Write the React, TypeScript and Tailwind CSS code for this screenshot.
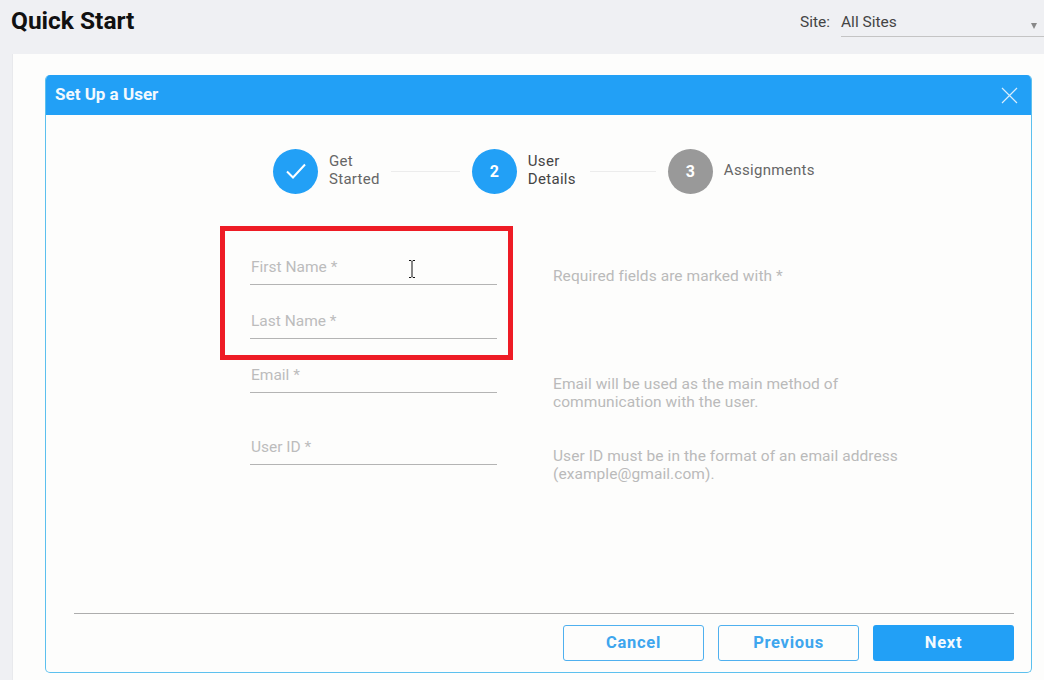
import React from 'react';

const fields = [
  { label: 'First Name *', rowClass: 'h-[54px]', hint: ['Required fields are marked with *'], hintClass: 'pt-[36px]' },
  { label: 'Last Name *', rowClass: 'h-[54px]', hint: [], hintClass: '' },
  { label: 'Email *', rowClass: 'h-[54px]', hint: ['Email will be used as the main method of', 'communication with the user.'], hintClass: 'pt-[36px]' },
  { label: 'User ID *', rowClass: 'h-[72px]', hint: ['User ID must be in the format of an email address', '(example@gmail.com).'], hintClass: 'pt-[54px]' },
];

const Step = ({ circle, done, lines, dark }: { circle: React.ReactNode; done: boolean; lines: string[]; dark?: boolean }) => (
  <div className="flex items-center">
    <div className={`flex h-[45px] w-[45px] items-center justify-center rounded-full text-[16px] font-bold text-white ${done ? 'bg-[#22a0f6]' : 'bg-[#999999]'}`}>
      {circle}
    </div>
    <div className={`mb-[3px] ml-[11px] text-[15px] leading-[18px] tracking-[0.3px] ${dark ? 'text-[#444444]' : 'text-[#666666]'}`}>
      {lines.map((l) => (
        <div key={l}>{l}</div>
      ))}
    </div>
  </div>
);

const Connector = ({ width }: { width: string }) => <div className={`h-px bg-[#ececec] ${width}`}></div>;

export default function App() {
  return (
    <div className="relative h-[680px] w-[1044px] overflow-hidden bg-[#eff0f3] font-['Roboto',sans-serif]">
      <div className="flex h-[54px] items-start justify-between">
        <h1 className="ml-[11px] mt-[5px] text-[24.5px] font-bold leading-[32px] text-[#111111]">Quick Start</h1>
        <div className="mt-[12px] flex items-start">
          <span className="mt-px text-[15.5px] leading-[18px] text-[#444444]">Site:</span>
          <div className="ml-[11px] flex h-[25px] w-[203px] items-start justify-between border-b border-[#c4c4c4]">
            <span className="mt-px text-[15.5px] leading-[18px] text-[#444444]">All Sites</span>
            <span className="mr-[7px] mt-[11px] h-0 w-0 border-x-[3.5px] border-t-[6px] border-x-transparent border-t-[#888888]"></span>
          </div>
        </div>
      </div>

      <div className="ml-[12px] h-[626px] border-l border-[#e8e9ec] bg-[#fdfdfc] pl-[32px] pt-[21px]">
        <div className="flex h-[598px] w-[987px] flex-col overflow-hidden rounded-[5px] border border-t-0 border-[#5cc0ee]">
          <div className="flex h-[40px] flex-none items-center justify-between bg-[#22a0f6] pl-[9px] pr-[13px]">
            <span className="text-[17px] font-bold text-[#f2f9fe]">Set Up a User</span>
            <svg width="17" height="17" viewBox="0 0 17 17" fill="none" stroke="#d8eefd" strokeWidth="1.2">
              <path d="M1 1 L16 16 M16 1 L1 16" />
            </svg>
          </div>

          <div className="flex items-center pl-[227px] pt-[34px]">
            <Step
              done
              lines={['Get', 'Started']}
              circle={
                <svg width="22" height="18" viewBox="0 0 22 18" fill="none" stroke="#ffffff" strokeWidth="2">
                  <path d="M2 8.5 L8 14.5 L20 1.5" />
                </svg>
              }
            />
            <div className="ml-[11px] mr-[12px]"><Connector width="w-[69px]" /></div>
            <Step done dark lines={['User', 'Details']} circle="2" />
            <div className="ml-[14px] mr-[12px]"><Connector width="w-[66px]" /></div>
            <Step done={false} lines={['Assignments']} circle="3" />
          </div>

          <div className="ml-[204px] mt-[37px]">
            {fields.map((f) => (
              <div key={f.label} className={`flex ${f.rowClass}`}>
                <div className="flex h-full w-[247px] flex-none items-end border-b border-[#b4b4b4] pb-[8px] pl-px">
                  <span className="text-[15.5px] leading-[18px] text-[#bcbcbc]">{f.label}</span>
                </div>
                <div className={`ml-[56px] flex-none text-[15.5px] leading-[18px] tracking-[0.07px] text-[#bababa] ${f.hintClass}`}>
                  {f.hint.map((h) => (
                    <div key={h}>{h}</div>
                  ))}
                </div>
              </div>
            ))}
          </div>

          <div className="mb-[11px] ml-[28px] mr-[17px] mt-auto">
            <div className="h-px bg-[#adadad]"></div>
            <div className="mt-[11px] flex justify-end gap-[14px]">
              <button className="h-[36px] w-[141px] rounded-[3px] border border-[#4fb0ef] pt-px text-[16.5px] font-bold tracking-[0.7px] text-[#3ea6ee]">Cancel</button>
              <button className="h-[36px] w-[141px] rounded-[3px] border border-[#4fb0ef] pt-px text-[16.5px] font-bold tracking-[0.7px] text-[#3ea6ee]">Previous</button>
              <button className="h-[36px] w-[141px] rounded-[3px] bg-[#22a0f6] pt-px text-[16.5px] font-bold tracking-[0.7px] text-[#f4fafe]">Next</button>
            </div>
          </div>
        </div>
      </div>

      <div className="absolute left-[220px] top-[226px] h-[134px] w-[293px] border-[5px] border-[#ee1c25]"></div>
      <svg className="absolute left-[407px] top-[259px]" width="10" height="20" viewBox="0 0 10 20" fill="none" stroke="#111111" strokeWidth="1">
        <path d="M2 1.5 H4 L5 2.5 L6 1.5 H8 M5 2.5 V17.5 M2 18.5 H4 L5 17.5 L6 18.5 H8" />
      </svg>
    </div>
  );
}
